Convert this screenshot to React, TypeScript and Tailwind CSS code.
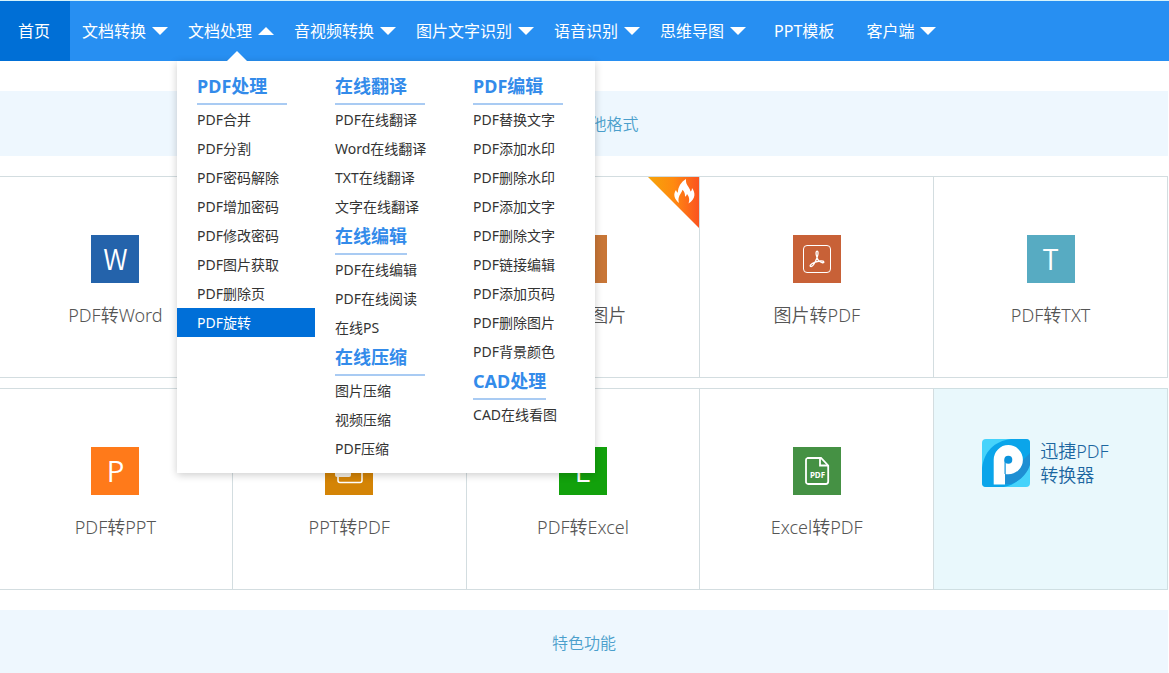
import React from 'react';
import clsx from 'clsx';

type NavItem = { label: string; arrow?: boolean; home?: boolean; open?: boolean };
type MenuGroup = { title: string; wide?: boolean; items: string[] };

const navItems: NavItem[] = [
  { label: '首页', home: true },
  { label: '文档转换', arrow: true },
  { label: '文档处理', arrow: true, open: true },
  { label: '音视频转换', arrow: true },
  { label: '图片文字识别', arrow: true },
  { label: '语音识别', arrow: true },
  { label: '思维导图', arrow: true },
  { label: 'PPT模板' },
  { label: '客户端', arrow: true },
];

const menuColumns: MenuGroup[][] = [
  [
    {
      title: 'PDF处理',
      wide: true,
      items: ['PDF合并', 'PDF分割', 'PDF密码解除', 'PDF增加密码', 'PDF修改密码', 'PDF图片获取', 'PDF删除页', 'PDF旋转'],
    },
  ],
  [
    { title: '在线翻译', wide: true, items: ['PDF在线翻译', 'Word在线翻译', 'TXT在线翻译', '文字在线翻译'] },
    { title: '在线编辑', items: ['PDF在线编辑', 'PDF在线阅读', '在线PS'] },
    { title: '在线压缩', wide: true, items: ['图片压缩', '视频压缩', 'PDF压缩'] },
  ],
  [
    {
      title: 'PDF编辑',
      wide: true,
      items: [
        'PDF替换文字',
        'PDF添加水印',
        'PDF删除水印',
        'PDF添加文字',
        'PDF删除文字',
        'PDF链接编辑',
        'PDF添加页码',
        'PDF删除图片',
        'PDF背景颜色',
      ],
    },
    { title: 'CAD处理', items: ['CAD在线看图'] },
  ],
];

const activeEntry = 'PDF旋转';

const Letter: React.FC<{ children: string }> = ({ children }) => (
  <span className="pb-0.5 font-['Noto_Sans_CJK_SC',sans-serif] text-[28px] leading-[46px] font-[350] text-white">
    {children}
  </span>
);

const AcrobatIcon = () => (
  <svg viewBox="0 0 48 48" className="h-12 w-12" fill="none" stroke="#fff" aria-hidden="true">
    <rect x="10.5" y="10.5" width="27" height="27" rx="3.5" />
    <path
      d="M24 16.2c1.6 0 1.2 3.6-.3 7.4-1.6 4-3.7 7.9-5.5 7.9-2.4 0-.4-2.9 3.4-4.2 3.6-1.3 8.9-2 9.2-.4.3 1.7-3.3.7-5.3-1.5-2.1-2.4-3.4-9.2-1.5-9.2z"
      strokeWidth="1.3"
      strokeLinejoin="round"
    />
  </svg>
);

const PictureIcon = () => (
  <svg viewBox="0 0 48 48" className="h-12 w-12" fill="none" stroke="#fff" strokeWidth="1.5" aria-hidden="true">
    <rect x="12" y="14" width="23" height="20" rx="2" />
    <circle cx="18" cy="20" r="2" />
    <path d="M13 31l7-6 5 4 5-6 5 6" />
  </svg>
);

const PdfFileIcon = () => (
  <svg viewBox="0 0 48 48" className="h-12 w-12" fill="none" stroke="#fff" strokeWidth="1.8" aria-hidden="true">
    <path d="M14.5 11H28l7.2 7.5v16a2.5 2.5 0 0 1-2.5 2.5H15.2a2.2 2.2 0 0 1-2.2-2.5V13a2 2 0 0 1 1.5-2z" />
    <path d="M27 11v7.5h8" />
    <text x="24.5" y="31" textAnchor="middle" fontSize="8" fontWeight="700" fill="#fff" stroke="none">
      PDF
    </text>
  </svg>
);

const SlidesIcon = () => (
  <svg viewBox="0 0 48 48" className="h-12 w-12" fill="none" stroke="#fff" strokeWidth="1.5" aria-hidden="true">
    <path d="M13 29v4.5a2 2 0 0 0 2 2h20a2 2 0 0 0 2-2V14a2 2 0 0 0-2-2H15a2 2 0 0 0-2 2v4" />
    <rect x="10" y="17" width="16" height="13" rx="2" fill="#f1ece2" stroke="none" />
  </svg>
);

const PLogo = () => (
  <svg viewBox="0 0 48 48" className="h-12 w-12 shrink-0 rounded" aria-hidden="true">
    <rect width="48" height="48" fill="#46d3fb" />
    <path d="M48 0H29C12 2 2 13 0 29v19h22c14-3 24-13 26-28z" fill="#0ba5ea" />
    <path d="M23 35v10h6c9-3 16-10 19-19V14l-7 7z" fill="#1e8fd3" />
    <path d="M11.7 45.500V20.700a14.600 14.600 0 1 1 14.600 14.600c-1.200 0-2.200-.1-3.300-.4v10.600z" fill="#fff" />
    <circle cx="26.3" cy="20.7" r="4" fill="#0b93dc" />
    <path d="M22.5 20.7h1.200v14.400h-1.200z" fill="#0b93dc" />
  </svg>
);

const FlameRibbon = () => (
  <svg viewBox="0 0 51 51" className="absolute top-0 right-0 h-[51px] w-[51px]" aria-hidden="true">
    <defs>
      <linearGradient id="ribbon" x1="0" y1="0" x2="1" y2="0">
        <stop offset="0" stopColor="#f5a50a" />
        <stop offset="0.5" stopColor="#ff8a10" />
        <stop offset="1" stopColor="#fb5320" />
      </linearGradient>
    </defs>
    <path d="M0 0h51v51z" fill="url(#ribbon)" />
    <path
      d="M31 26c-5-4-6-9-3-13 .5 1.500 1 2.300 1.800 2.800C30 10 33 5 38 2c-.3 3 .5 5.500 2.500 8 1 1.500 1.800 3 2 4.500 1-.5 1.500-2 1.500-3.500 3.500 4.500 4 11-3.500 15.500 1.500-4 .5-7-1.500-9.500-.5 1.500-1 2.200-2 2.700.2-3-.5-5-2.500-7-1 4-5.500 6.500-3.500 13.300z"
      fill="#fff"
    />
  </svg>
);

const tools = [
  { label: 'PDF转Word', tile: 'bg-[#2463ab]', icon: <Letter>W</Letter> },
  { label: 'Word转PDF', tile: 'bg-[#2463ab]', icon: <PdfFileIcon /> },
  { label: 'PDF转图片', tile: 'bg-[#c87637]', icon: <PictureIcon />, hot: true },
  { label: '图片转PDF', tile: 'bg-[#c86137]', icon: <AcrobatIcon /> },
  { label: 'PDF转TXT', tile: 'bg-[#57abc2]', icon: <Letter>T</Letter> },
  { label: 'PDF转PPT', tile: 'bg-[#ff7a1a]', icon: <Letter>P</Letter> },
  { label: 'PPT转PDF', tile: 'bg-[#d48406]', icon: <SlidesIcon /> },
  { label: 'PDF转Excel', tile: 'bg-[#12a10c]', icon: <Letter>E</Letter> },
  { label: 'Excel转PDF', tile: 'bg-[#459144]', icon: <PdfFileIcon /> },
];

const Arrow: React.FC<{ up?: boolean }> = ({ up }) => (
  <svg viewBox="0 0 16 8" className="h-2 w-4" fill="#fff" aria-hidden="true">
    <path d={up ? 'M0 8h16L8 0z' : 'M0 0h16L8 8z'} />
  </svg>
);

const DropMenu = () => (
  <div className="absolute top-full left-px z-10 flex w-[418px] bg-white py-2.5 shadow-[0_2px_8px_rgba(0,0,0,0.2)]">
    <svg viewBox="0 0 20 10" className="absolute -top-2.5 left-[50px] h-2.5 w-5" fill="#fff" aria-hidden="true">
      <path d="M10 0l10 10H0z" />
    </svg>
    {menuColumns.map((groups, index) => (
      <div key={index} className="w-[138px]">
        {groups.map((group) => (
          <section key={group.title}>
            <h3
              className={clsx(
                'ml-5 h-[34px] w-fit border-b-2 border-[#a9cbf3] text-lg leading-[30px] font-bold text-[#338bea]',
                group.wide && 'min-w-[90px]'
              )}
            >
              {group.title}
            </h3>
            <ul>
              {group.items.map((item) => (
                <li key={item}>
                  <a
                    href="#"
                    className={clsx(
                      'block pl-5 text-sm leading-[29px] whitespace-nowrap',
                      item === activeEntry ? 'bg-[#006fd8] text-white' : 'text-[#333]'
                    )}
                  >
                    {item}
                  </a>
                </li>
              ))}
            </ul>
          </section>
        ))}
      </div>
    ))}
  </div>
);

const SectionTitle: React.FC<{ children: string }> = ({ children }) => (
  <h2 className="h-[65px] bg-[#eef7fe] text-center text-base leading-[66px] font-[350] text-[#4b9fcc]">{children}</h2>
);

const App: React.FC = () => {
  return (
    <div className="h-screen overflow-hidden bg-white font-['Noto_Sans','Noto_Sans_CJK_SC',sans-serif]">
      {/* Top navigation */}
      <nav className="border-t border-[#d5f3fb] bg-[#278ff2]">
        <ul className="flex">
          {navItems.map((item) => (
            <li key={item.label} className={clsx('relative', item.home && 'bg-[#006fd6]')}>
              <a
                href="#"
                className={clsx(
                  'flex h-[60px] items-center gap-1.5 text-base whitespace-nowrap text-white',
                  item.arrow ? 'pr-2 pl-3' : item.home ? 'pr-5 pl-[18px]' : 'px-5'
                )}
              >
                {item.label}
                {item.arrow && <Arrow up={item.open} />}
              </a>
              {item.open && <DropMenu />}
            </li>
          ))}
        </ul>
      </nav>

      {/* Tool list */}
      <main className="mr-px flex flex-col gap-5 pt-[30px]">
        <SectionTitle>PDF转其他格式</SectionTitle>
        <div className="-ml-px grid grid-cols-5 gap-y-2.5">
          {tools.map((tool) => (
            <a
              key={tool.label}
              href="#"
              className="relative flex h-[202px] flex-col items-center gap-4 border-y border-r border-[#d3dde0] pt-[58px]"
            >
              <span className={clsx('flex h-12 w-12 items-center justify-center', tool.tile)}>{tool.icon}</span>
              <span className="text-lg leading-8 font-[350] text-[#555]">{tool.label}</span>
              {tool.hot && <FlameRibbon />}
            </a>
          ))}
          <a
            href="#"
            className="flex h-[202px] items-start gap-2.5 border-y border-r border-[#cfdfe2] bg-[#e9f8fc] pt-[50px] pl-12 text-lg leading-6 font-[350] text-[#1c66a0]"
          >
            <PLogo />
            <span>
              迅捷PDF
              <br />
              转换器
            </span>
          </a>
        </div>
        <SectionTitle>特色功能</SectionTitle>
      </main>
    </div>
  );
};

export default App;
